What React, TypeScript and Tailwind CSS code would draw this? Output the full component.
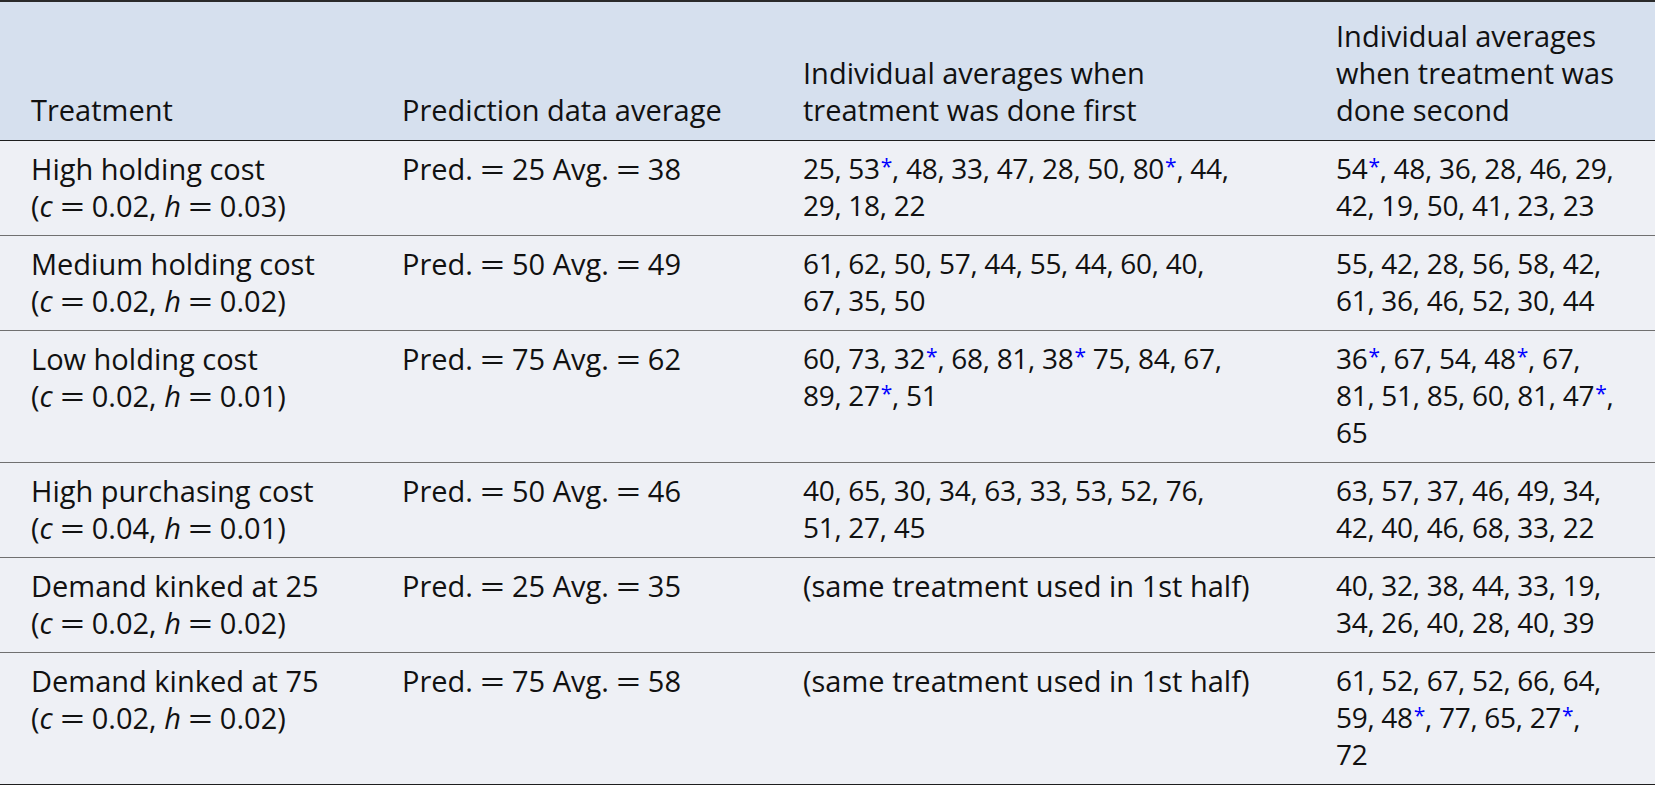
import React from 'react';

type Row = {
  name: string;
  c: string;
  h: string;
  pred: string;
  avg: string;
  first: string[];
  second: string[];
};

const rows: Row[] = [
  {
    name: 'High holding cost', c: '0.02', h: '0.03', pred: '25', avg: '38',
    first: ['25, 53*, 48, 33, 47, 28, 50, 80*, 44,', '29, 18, 22'],
    second: ['54*, 48, 36, 28, 46, 29,', '42, 19, 50, 41, 23, 23'],
  },
  {
    name: 'Medium holding cost', c: '0.02', h: '0.02', pred: '50', avg: '49',
    first: ['61, 62, 50, 57, 44, 55, 44, 60, 40,', '67, 35, 50'],
    second: ['55, 42, 28, 56, 58, 42,', '61, 36, 46, 52, 30, 44'],
  },
  {
    name: 'Low holding cost', c: '0.02', h: '0.01', pred: '75', avg: '62',
    first: ['60, 73, 32*, 68, 81, 38* 75, 84, 67,', '89, 27*, 51'],
    second: ['36*, 67, 54, 48*, 67,', '81, 51, 85, 60, 81, 47*,', '65'],
  },
  {
    name: 'High purchasing cost', c: '0.04', h: '0.01', pred: '50', avg: '46',
    first: ['40, 65, 30, 34, 63, 33, 53, 52, 76,', '51, 27, 45'],
    second: ['63, 57, 37, 46, 49, 34,', '42, 40, 46, 68, 33, 22'],
  },
  {
    name: 'Demand kinked at 25', c: '0.02', h: '0.02', pred: '25', avg: '35',
    first: ['(same treatment used in 1st half)'],
    second: ['40, 32, 38, 44, 33, 19,', '34, 26, 40, 28, 40, 39'],
  },
  {
    name: 'Demand kinked at 75', c: '0.02', h: '0.02', pred: '75', avg: '58',
    first: ['(same treatment used in 1st half)'],
    second: ['61, 52, 67, 52, 66, 64,', '59, 48*, 77, 65, 27*,', '72'],
  },
];

const cols = 'grid grid-cols-[371px_401px_533px_350px]';

// blue significance marker
function Star() {
  return <sup className="text-[#0000ff] text-[21px] -top-[5px] ml-[1px]">*</sup>;
}

function Line({ text }: { text: string }) {
  const parts = text.split('*');
  const numeric = /^[0-9]/.test(text);
  return (
    <div className={numeric ? 'text-[28px] tracking-[-0.3px]' : ''}>
      {parts.map((p, i) => (
        <React.Fragment key={i}>
          {p}
          {i < parts.length - 1 && <Star />}
        </React.Fragment>
      ))}
    </div>
  );
}

// wide math-style equals sign
const Eq = () => (
  <span className="inline-block w-[25px] mx-[7px] text-center scale-x-150">=</span>
);

export default function App() {
  return (
    <div className="w-[1655px] h-[785px] bg-[#eef0f5] text-[#111] font-['Open_Sans',sans-serif] text-[29px] leading-[37px]">
      <div className="border-t-2 border-[#2a2a2a] border-b border-b-[#1e1e1e] bg-[#d6e0ee] h-[141px]">
        <div className={`${cols} h-full items-end pb-[12px]`}>
          <div className="pl-[31px]">Treatment</div>
          <div className="pl-[31px]">Prediction data average</div>
          <div className="pl-[31px]">
            Individual averages when
            <br />
            treatment was done first
          </div>
          <div className="pl-[31px]">
            Individual averages
            <br />
            when treatment was
            <br />
            done second
          </div>
        </div>
      </div>

      {rows.map((r, i) => (
        <div
          key={r.name}
          className={`${cols} pt-[9px] pb-[11px] ${i === rows.length - 1 ? 'border-b-2 border-[#1e1e1e]' : 'border-b border-[#707070]'}`}
        >
          <div className="pl-[31px]">
            <div>{r.name}</div>
            <div>
              (<i>c</i>
              <Eq />
              {r.c}, <i>h</i>
              <Eq />
              {r.h})
            </div>
          </div>
          <div className="pl-[31px]">
            Pred.
            <Eq />
            {r.pred} Avg.
            <Eq />
            {r.avg}
          </div>
          <div className="pl-[31px]">
            {r.first.map((t, k) => (
              <Line key={k} text={t} />
            ))}
          </div>
          <div className="pl-[31px]">
            {r.second.map((t, k) => (
              <Line key={k} text={t} />
            ))}
          </div>
        </div>
      ))}
    </div>
  );
}
